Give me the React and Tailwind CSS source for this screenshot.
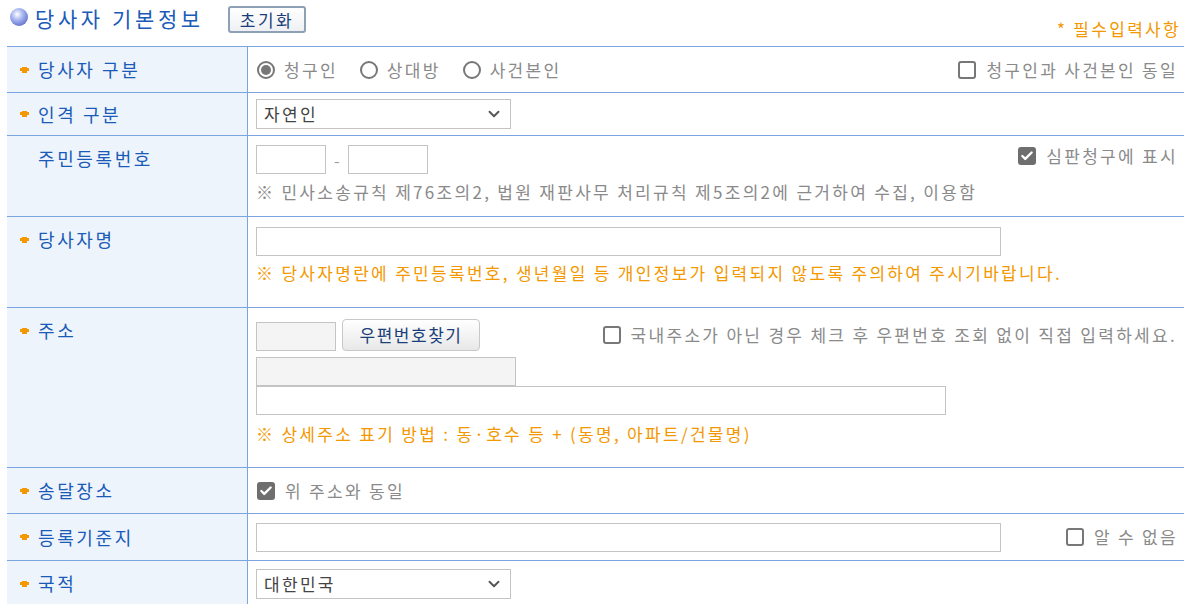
import { Check, ChevronDown } from 'lucide-react';

const font = { fontFamily: '"Noto Sans CJK KR", "Noto Sans", sans-serif' };

const Star = () => (
  <span className="inline-flex w-[9px] h-[6px] mr-[9px] shrink-0">
    <svg viewBox="0 0 9 6" width="9" height="6">
      <rect x="0" y="1" width="9" height="3" fill="#f39800" />
      <rect x="2" y="0" width="5" height="6" fill="#f39800" />
    </svg>
  </span>
);

const Label = ({ text, star = true, top = false }) => (
  <div className={`w-[241px] shrink-0 bg-[#eef4fc] border-r border-[#7aa5e0] flex pl-[13px] text-[18px] tracking-[2.6px] text-[#1a5bb8] ${top ? 'items-start pt-[9px]' : 'items-center'}`}>
    <div className="flex items-center">
      {star ? <Star /> : <span className="inline-block w-[18px]" />}
      <span>{text}</span>
    </div>
  </div>
);

const Row = ({ children, h, label, star, top }) => (
  <div className={`flex border-b border-[#7aa5e0] ${h}`}>
    <Label text={label} star={star} top={top} />
    <div className="flex-1 pl-[8px] pr-[6px]">{children}</div>
  </div>
);

const Box = ({ checked }) =>
  checked ? (
    <span className="w-[18px] h-[18px] rounded-[3px] bg-[#6e6e6e] flex items-center justify-center shrink-0">
      <Check size={14} color="white" strokeWidth={4} />
    </span>
  ) : (
    <span className="w-[18px] h-[18px] rounded-[3px] border-2 border-[#777] bg-white shrink-0" />
  );

const CheckItem = ({ checked, text }) => (
  <label className="flex items-center gap-[10px] text-[17px] tracking-[2.3px] text-[#8a8a8a]">
    <Box checked={checked} />
    <span>{text}</span>
  </label>
);

const Radio = ({ checked, text }) => (
  <label className="flex items-center gap-[9px] text-[17px] tracking-[2.3px] text-[#8a8a8a]">
    <span className="w-[18px] h-[18px] rounded-full border-2 border-[#777] flex items-center justify-center">
      {checked && <span className="w-[10px] h-[10px] rounded-full bg-[#777]" />}
    </span>
    <span>{text}</span>
  </label>
);

const Select = ({ value }) => (
  <div className="w-[255px] h-[30px] border border-[#c4c4c4] flex items-center justify-between px-[7px] text-[17px] tracking-[2.3px] text-[#444] bg-white">
    <span>{value}</span>
    <ChevronDown size={18} color="#555" strokeWidth={2.5} />
  </div>
);

export default function App() {
  return (
    <div className="w-[1189px] h-[604px] overflow-hidden bg-white" style={font}>
      <div className="flex items-center h-[46px] pl-[10px] pr-[8px]">
        <span className="w-[18px] h-[18px] rounded-full bg-[radial-gradient(circle_at_40%_35%,#ffffff_0%,#aab8f0_35%,#3c4fb8_100%)] mr-[7px] relative top-[-6px]" />
        <span className="text-[21px] tracking-[3.6px] text-[#1a5bb8] relative top-[-4px]">당사자 기본정보</span>
        <button className="ml-[24px] relative top-[-4px] h-[27px] px-[10px] border-2 border-[#8ea0b8] rounded-[3px] bg-gradient-to-b from-white to-[#eef0f3] text-[17px] tracking-[2.5px] text-[#1a3f7a] leading-none">초기화</button>
        <span className="ml-auto text-[17px] tracking-[2.3px] text-[#f39800] relative top-[6px]">* 필수입력사항</span>
      </div>
      <div className="ml-[7px] mr-[5px] border-t border-[#7aa5e0]">
        <Row h="h-[46px]" label="당사자 구분">
          <div className="flex items-center h-full">
            <div className="flex items-center gap-[22px] pl-[1px]">
              <Radio checked text="청구인" />
              <Radio text="상대방" />
              <Radio text="사건본인" />
            </div>
            <div className="ml-auto">
              <CheckItem text="청구인과 사건본인 동일" />
            </div>
          </div>
        </Row>
        <Row h="h-[43px]" label="인격 구분">
          <div className="flex items-center h-full">
            <Select value="자연인" />
          </div>
        </Row>
        <Row h="h-[81px]" label="주민등록번호" star={false} top>
          <div className="pt-[9px]">
            <div className="flex items-center">
              <div className="w-[70px] h-[29px] border border-[#c4c4c4]" />
              <span className="mx-[8px] text-[#999]">-</span>
              <div className="w-[80px] h-[29px] border border-[#c4c4c4]" />
              <div className="ml-auto relative top-[-4px]">
                <CheckItem checked text="심판청구에 표시" />
              </div>
            </div>
            <div className="mt-[5px] text-[17px] tracking-[2.3px] text-[#8a8a8a]">※ 민사소송규칙 제76조의2, 법원 재판사무 처리규칙 제5조의2에 근거하여 수집, 이용함</div>
          </div>
        </Row>
        <Row h="h-[91px]" label="당사자명" top>
          <div className="pt-[10px]">
            <div className="w-[745px] h-[29px] border border-[#c4c4c4]" />
            <div className="mt-[4px] text-[17px] tracking-[2.3px] text-[#f39800]">※ 당사자명란에 주민등록번호, 생년월일 등 개인정보가 입력되지 않도록 주의하여 주시기바랍니다.</div>
          </div>
        </Row>
        <Row h="h-[160px]" label="주소" top>
          <div className="pt-[10px]">
            <div className="flex items-center">
              <div className="w-[80px] h-[29px] border border-[#c4c4c4] bg-[#f4f4f4] mt-[4px]" />
              <button className="ml-[6px] w-[138px] h-[32px] border border-[#c8c8c8] rounded-[4px] bg-gradient-to-b from-white to-[#e8e8e8] text-[17px] tracking-[1.5px] text-[#1a3f7a]">우편번호찾기</button>
              <div className="ml-auto mr-[1px]">
                <CheckItem text="국내주소가 아닌 경우 체크 후 우편번호 조회 없이 직접 입력하세요." />
              </div>
            </div>
            <div className="mt-[6px] w-[260px] h-[29px] border border-[#c4c4c4] bg-[#f4f4f4]" />
            <div className="w-[690px] h-[29px] border border-[#c4c4c4]" />
            <div className="mt-[6px] text-[17px] tracking-[2.3px] text-[#f39800]">※ 상세주소 표기 방법 : 동·호수 등 + (동명, 아파트/건물명)</div>
          </div>
        </Row>
        <Row h="h-[46px]" label="송달장소">
          <div className="flex items-center h-full pl-[1px]">
            <CheckItem checked text="위 주소와 동일" />
          </div>
        </Row>
        <Row h="h-[47px]" label="등록기준지">
          <div className="flex items-center h-full">
            <div className="w-[745px] h-[29px] border border-[#c4c4c4]" />
            <div className="ml-auto">
              <CheckItem text="알 수 없음" />
            </div>
          </div>
        </Row>
        <Row h="h-[46px]" label="국적">
          <div className="flex items-center h-full">
            <Select value="대한민국" />
          </div>
        </Row>
      </div>
    </div>
  );
}
